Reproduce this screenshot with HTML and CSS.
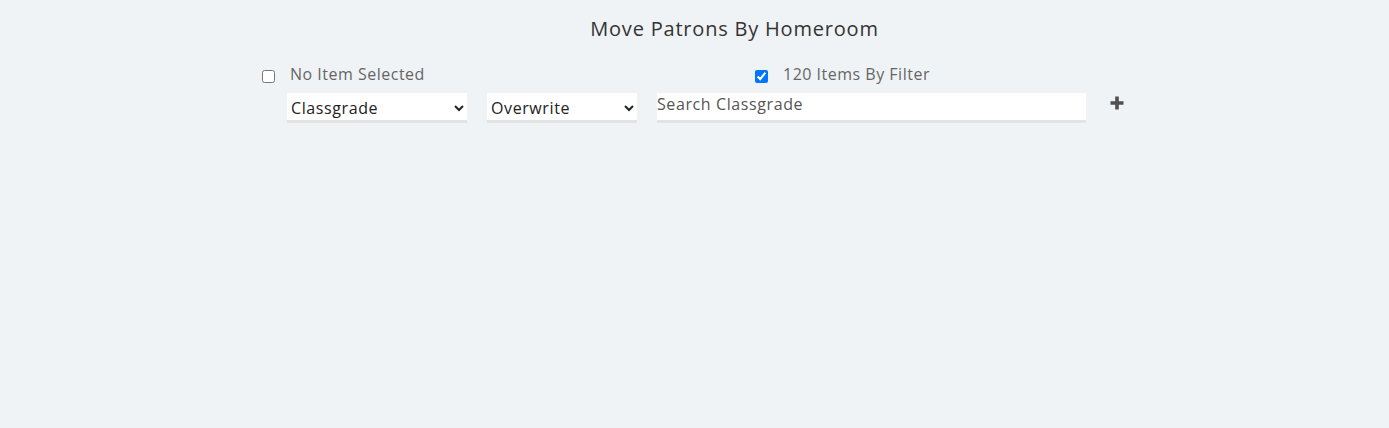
FILE: index.html
```html
<!DOCTYPE html>
<html lang="en">
<head>
    <meta charset="UTF-8">
    <meta name="viewport" content="width=device-width, initial-scale=1.0">
    <title>Move Patrons By Homeroom</title>
    <link rel="stylesheet" href="styles.css">
</head>
<body>
    <div class="page">
        <h1 class="title">Move Patrons By Homeroom</h1>

        <div class="filters">
            <div class="check-row">
                <label class="check-group">
                    <input type="checkbox" id="selectItems">
                    <span>No Item Selected</span>
                </label>
                <label class="check-group">
                    <input type="checkbox" id="byFilter" checked>
                    <span>120 Items By Filter</span>
                </label>
            </div>

            <div class="field-row">
                <select class="field field-column">
                    <option>Classgrade</option>
                    <option>Homeroom</option>
                </select>
                <select class="field field-mode">
                    <option>Overwrite</option>
                    <option>Append</option>
                </select>
                <input type="text" class="field field-search" placeholder="Search Classgrade">
                <button class="add-btn" type="button" aria-label="Add">
                    <svg width="14" height="14" viewBox="0 0 14 14">
                        <path d="M5.2 0.5h3.6v4.7h4.7v3.6H8.8v4.7H5.2V8.8H0.5V5.2h4.7z" fill="#505050"/>
                    </svg>
                </button>
            </div>
        </div>
    </div>
</body>
</html>
```

FILE: styles.css
```css
body {
    margin: 0;
    padding: 0;
    background-color: #eff3f6;
    font-family: "Open Sans", Arial, sans-serif;
    letter-spacing: 0.6px;
    min-height: 428px;
}

.page {
    padding-left: 80px;
}

.title {
    margin: 0;
    padding-top: 15px;
    text-align: center;
    font-size: 20px;
    font-weight: 400;
    line-height: 28px;
    letter-spacing: 0.8px;
    color: #333;
}

.filters {
    margin-left: 182px;
    margin-top: 20px;
}

.check-row {
    display: flex;
    align-items: center;
    height: 26px;
}

.check-group {
    display: flex;
    align-items: center;
    gap: 15px;
    width: 493px;
    font-size: 16px;
    letter-spacing: 0.5px;
    color: #666;
}

.check-group span {
    margin-top: -4px;
}

.check-group input {
    margin: 0;
    width: 13px;
    height: 13px;
}

.field-row {
    display: flex;
    align-items: flex-start;
    gap: 20px;
    padding-left: 25px;
    margin-top: 4px;
}

.field {
    height: 30px;
    box-sizing: border-box;
    border: none;
    border-bottom: 3px solid #e3e3e3;
    border-radius: 0;
    background-color: #fff;
    font-family: inherit;
    font-size: 16px;
    letter-spacing: 0.6px;
    color: #222;
    outline: none;
}

.field-column {
    width: 180px;
    padding: 3px 0 0 0;
}

.field-mode {
    width: 150px;
    padding: 3px 0 0 0;
}

.field-search {
    width: 429px;
    padding: 0 0 5px 0;
    color: #444;
}

.field-search::placeholder {
    color: #555;
}

.add-btn {
    margin-left: 4px;
    margin-top: 3px;
    padding: 0;
    border: none;
    background: none;
    cursor: pointer;
}
```
